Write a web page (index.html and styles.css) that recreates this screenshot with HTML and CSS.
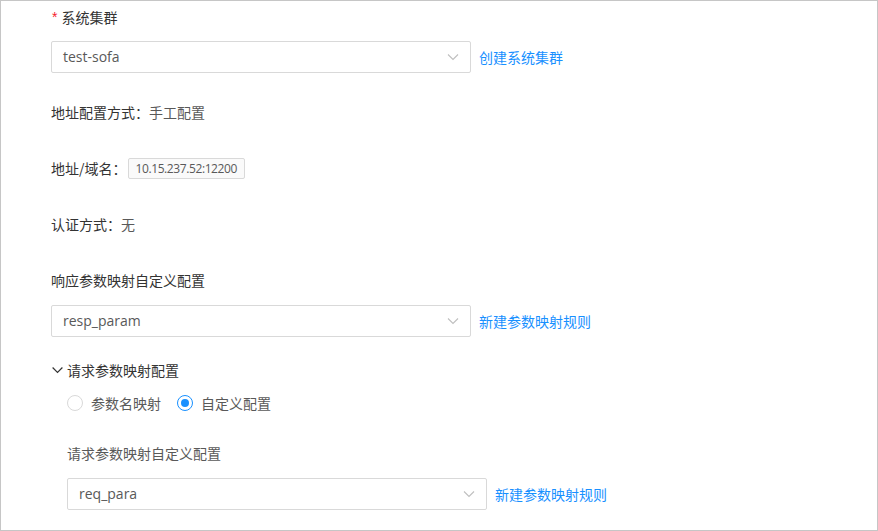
FILE: index.html
```html
<!DOCTYPE html>
<html lang="zh-CN">
<head>
<meta charset="utf-8">
<title>配置</title>
<link rel="stylesheet" href="styles.css">
</head>
<body>
<div class="frame">
  <div class="form">
    <div class="label-row first"><span class="req">*</span><span class="dark">系统集群</span></div>
    <div class="select-row gap-13">
      <div class="select"><span class="val">test-sofa</span><svg class="arrow" width="12" height="8" viewBox="0 0 12 8"><path d="M1 1.5 L6 6.5 L11 1.5" fill="none" stroke="#bfbfbf" stroke-width="1.1"/></svg></div>
      <a class="link">创建系统集群</a>
    </div>
    <div class="text-row gap-28"><span class="dark">地址配置方式：</span><span class="mid">手工配置</span></div>
    <div class="text-row gap-34"><span class="dark">地址/域名：</span><span class="tag">10.15.237.52:12200</span></div>
    <div class="text-row gap-34"><span class="dark">认证方式：</span><span class="mid">无</span></div>
    <div class="text-row gap-34"><span class="dark">响应参数映射自定义配置</span></div>
    <div class="select-row gap-14">
      <div class="select"><span class="val">resp_param</span><svg class="arrow" width="12" height="8" viewBox="0 0 12 8"><path d="M1 1.5 L6 6.5 L11 1.5" fill="none" stroke="#bfbfbf" stroke-width="1.1"/></svg></div>
      <a class="link">新建参数映射规则</a>
    </div>
    <div class="text-row gap-22 collapse"><svg class="caret" width="11" height="8" viewBox="0 0 11 8"><path d="M0.6 1.5 L5.5 6.4 L10.4 1.5" fill="none" stroke="#333" stroke-width="1.2"/></svg><span class="dark">请求参数映射配置</span></div>
    <div class="sub">
      <div class="radio-row">
        <label class="radio"><span class="circle"></span><span class="mid">参数名映射</span></label>
        <label class="radio checked"><span class="circle"></span><span class="mid">自定义配置</span></label>
      </div>
      <div class="text-row gap-28"><span class="mid">请求参数映射自定义配置</span></div>
      <div class="select-row gap-14">
        <div class="select"><span class="val">req_para</span><svg class="arrow" width="12" height="8" viewBox="0 0 12 8"><path d="M1 1.5 L6 6.5 L11 1.5" fill="none" stroke="#bfbfbf" stroke-width="1.1"/></svg></div>
        <a class="link">新建参数映射规则</a>
      </div>
    </div>
  </div>
</div>
</body>
</html>
```

FILE: styles.css
```css
* { box-sizing: border-box; }
html, body { margin: 0; padding: 0; background: #fff; }
body {
  font-family: "Noto Sans CJK SC", "Open Sans", sans-serif;
  font-size: 14px;
  line-height: 22px;
}
.frame {
  width: 878px;
  height: 531px;
  border: 1px solid #c6c6c6;
  overflow: hidden;
}
.form {
  padding: 5px 0 0 50px;
}
.dark { color: #333; }
.mid { color: #595959; }
.label-row { height: 22px; display: flex; align-items: center; }
.req { color: #f5222d; margin-right: 4px; margin-left: 1px; font-family: "Liberation Sans", sans-serif; font-size: 14px; }
.text-row { height: 22px; display: flex; align-items: center; }
.gap-13 { margin-top: 13px; }
.gap-14 { margin-top: 14px; }
.gap-22 { margin-top: 22px; }
.gap-28 { margin-top: 28px; }
.gap-34 { margin-top: 34px; }
.select-row { display: flex; align-items: center; }
.select {
  width: 420px;
  height: 32px;
  border: 1px solid #d9d9d9;
  border-radius: 2px;
  display: flex;
  align-items: center;
  justify-content: space-between;
  padding: 0 11px 0 11px;
  background: #fff;
}
.val { color: #595959; font-family: "Open Sans", "Noto Sans CJK SC", sans-serif; font-size: 14px; }
.arrow { display: block; }
.link { color: #1890ff; margin-left: 8px; }
.text-row .dark + .tag { margin-left: 1px; }
.tag {
  height: 21px;
  line-height: 19px;
  border: 1px solid #d9d9d9;
  background: #fafafa;
  border-radius: 2px;
  padding: 0 7px;
  font-size: 12px;
  letter-spacing: -0.4px;
  color: #595959;
  font-family: "Open Sans", "Noto Sans CJK SC", sans-serif;
}
.collapse .caret { margin-right: 4px; margin-left: 1px; }
.sub { padding-left: 16px; }
.radio-row { margin-top: 11px; height: 22px; display: flex; align-items: center; }
.radio { display: flex; align-items: center; margin-right: 16px; }
.circle {
  width: 16px; height: 16px;
  border: 1px solid #d9d9d9;
  border-radius: 50%;
  margin-right: 8px;
  position: relative;
  background: #fff;
}
.radio.checked .circle { border-color: #1890ff; }
.radio.checked .circle::after {
  content: "";
  position: absolute;
  left: 3px; top: 3px;
  width: 8px; height: 8px;
  border-radius: 50%;
  background: #1890ff;
}
```
